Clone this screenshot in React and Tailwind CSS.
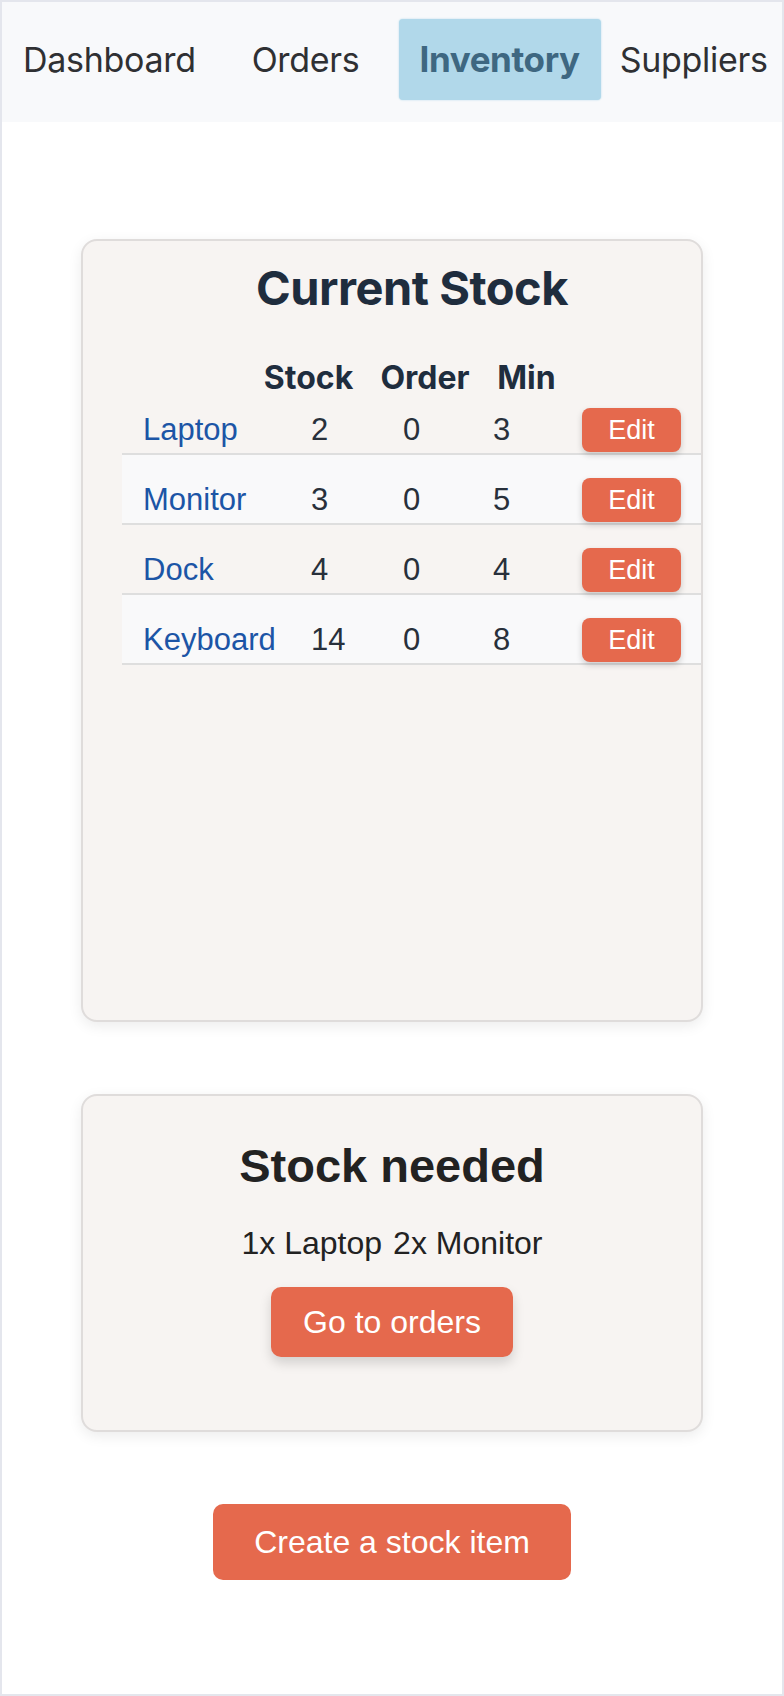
import React from 'react';

const items = [
  { name: 'Laptop', stock: 2, order: 0, min: 3 },
  { name: 'Monitor', stock: 3, order: 0, min: 5 },
  { name: 'Dock', stock: 4, order: 0, min: 4 },
  { name: 'Keyboard', stock: 14, order: 0, min: 8 },
];

const sans = 'font-["Liberation_Sans",Arial,sans-serif]';
const inter = 'font-["Inter","Noto_Sans",sans-serif]';

function Nav() {
  return (
    <nav className={`flex h-[120px] items-center bg-[#f8f9fb] pb-[6px] pl-[21px] text-[34px] text-[#2f3033] ${inter}`}>
      <a className="tracking-[-0.3px]">Dashboard</a>
      <a className="ml-[56px] tracking-[-0.3px]">Orders</a>
      <a className="ml-[39px] flex h-[81px] items-center rounded-[4px] bg-[#b1d8ea] px-[21px] text-[35px] font-bold tracking-[-0.4px] text-[#3e6781] shadow-[0_0_2px_#b1d8ea]">
        Inventory
      </a>
      <a className="ml-[19px] tracking-[-0.3px]">Suppliers</a>
    </nav>
  );
}

function StockTable() {
  return (
    <div className="ml-[39px] mt-[56px]">
      <div className={`flex h-[22px] text-[32px] font-bold leading-[22px] text-[#1f2d3e] ${inter}`}>
        <div className="w-[128px]" />
        <div className="w-[117px] text-center">Stock</div>
        <div className="w-[116px] text-center">Order</div>
        <div className="w-[87px] text-center">Min</div>
      </div>
      {items.map((item, i) => (
        <div
          key={item.name}
          className={`flex border-b-2 border-[#dedede] pb-[1px] ${i === 0 ? 'pt-[19px]' : 'pt-[23px]'} ${i % 2 === 1 ? 'bg-[#f9f9fa]' : ''} ${sans}`}
        >
          <div className="flex h-[44px] items-center text-[31px] text-[#28303b]">
            <span className="w-[189px] pl-[21px] text-[#1c55a6]">{item.name}</span>
            <span className="w-[92px]">{item.stock}</span>
            <span className="w-[90px]">{item.order}</span>
            <span className="w-[89px]">{item.min}</span>
          </div>
          <button className="h-[44px] w-[99px] rounded-[8px] bg-[#e5694d] text-[27px] text-white shadow-[0_3px_6px_rgba(0,0,0,0.18)]">
            Edit
          </button>
        </div>
      ))}
    </div>
  );
}

export default function App() {
  return (
    <div className="flex h-[1696px] flex-col border-2 border-[#e4e6ed] bg-white">
      <Nav />
      <main className="flex flex-col items-center">
        <section className="mt-[117px] h-[783px] w-[622px] rounded-[16px] border-2 border-[#dfdcdb] bg-[#f7f4f2] pt-[23px] shadow-[0_4px_14px_rgba(0,0,0,0.08)]">
          <h1 className={`pl-[40px] text-center text-[47px] font-bold leading-none tracking-[-0.5px] text-[#1f2d3e] ${inter}`}>
            Current Stock
          </h1>
          <StockTable />
        </section>

        <section className={`mt-[72px] flex h-[338px] w-[622px] flex-col items-center rounded-[16px] border-2 border-[#dfdcdb] bg-[#f7f4f2] pt-[46px] shadow-[0_4px_14px_rgba(0,0,0,0.08)] ${sans}`}>
          <h2 className="text-[47px] font-bold leading-none text-[#222222]">Stock needed</h2>
          <div className="mt-[38px] flex gap-[11px] text-[32px] leading-none text-[#222222]">
            <span>1x Laptop</span>
            <span>2x Monitor</span>
          </div>
          <button className="mt-[28px] h-[70px] rounded-[10px] bg-[#e5694d] px-[32px] text-[32px] text-white shadow-[0_6px_12px_rgba(0,0,0,0.15)]">
            Go to orders
          </button>
        </section>

        <button className={`mt-[72px] h-[76px] rounded-[10px] bg-[#e5694d] px-[41px] text-[32px] text-white ${sans}`}>
          Create a stock item
        </button>
      </main>
    </div>
  );
}
